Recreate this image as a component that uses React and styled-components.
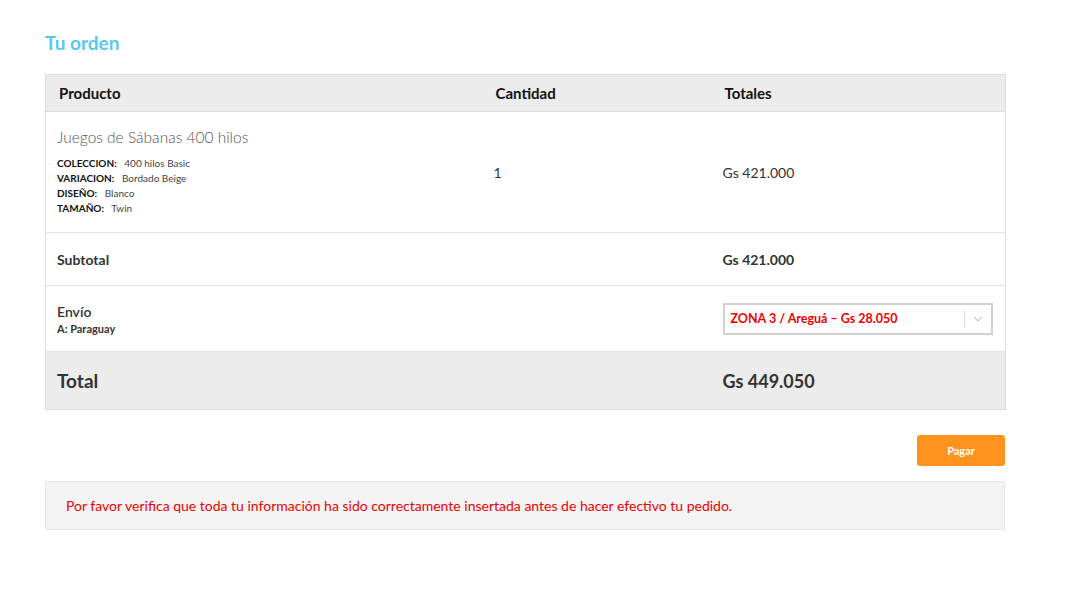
import React from "react";
import styled, { createGlobalStyle } from "styled-components";

const Global = createGlobalStyle`
  html, body { margin: 0; padding: 0; background: #fff; }
  body { font-family: "Lato", "Open Sans", sans-serif; color: #333; }
`;

const Page = styled.div`
  width: 960px;
  padding: 32px 0 0 45px;
`;

const Title = styled.h3`
  margin: 0 0 20px;
  font-size: 19px;
  font-weight: 700;
  color: #5ac8ee;
  line-height: 22px;
`;

const Table = styled.table`
  width: 960px;
  border-collapse: collapse;
  border: 1px solid #dcdcdc;
  table-layout: fixed;
`;

const Th = styled.th`
  background: #ececec;
  text-align: left;
  font-size: 15px;
  font-weight: 700;
  color: #111;
  height: 36px;
  padding: 0 13px;
  border-bottom: 1px solid #dcdcdc;
`;

const Tr = styled.tr`
  background: ${(p) => (p.$shade ? "#ececec" : "#fff")};
  border-top: 1px solid #e2e2e2;
`;

const Td = styled.td`
  padding: 0 11px;
  height: ${(p) => p.$h}px;
  vertical-align: middle;
  font-size: ${(p) => p.$size || 14}px;
  font-weight: ${(p) => p.$weight || 400};
  color: #333;
`;

const ProductName = styled.div`
  font-size: 15.5px;
  font-weight: 300;
  color: #555;
  margin-bottom: 10px;
`;

const Meta = styled.div`
  font-size: 10px;
  line-height: 15px;
  color: #444;
  & b { font-weight: 700; color: #111; margin-right: 5px; }
`;

const Small = styled.div`
  font-size: 11px;
  font-weight: 700;
  margin-top: 2px;
`;

const Select = styled.div`
  display: flex;
  align-items: center;
  width: 266px;
  height: 28px;
  border: 2px solid #d0d0d0;
  background: #fff;
`;

const SelectText = styled.span`
  flex: 1;
  padding-left: 6px;
  color: #ee0000;
  font-size: 12.5px;
  font-weight: 700;
`;

const Arrow = styled.span`
  width: 26px;
  height: 18px;
  border-left: 1px solid #d8d8d8;
  display: flex;
  align-items: center;
  justify-content: center;
`;

const Actions = styled.div`
  display: flex;
  justify-content: flex-end;
  margin: 25px 0 15px;
`;

const Button = styled.button`
  width: 88px;
  height: 31px;
  border: 0;
  border-radius: 3px;
  background: #ff931e;
  color: #fff;
  font-family: inherit;
  font-size: 11px;
  font-weight: 700;
`;

const Notice = styled.div`
  box-sizing: border-box;
  width: 960px;
  height: 49px;
  display: flex;
  align-items: center;
  padding-left: 20px;
  background: #f4f4f4;
  border: 1px solid #e8e8e8;
  color: #ee0000;
  font-size: 14px;
`;

export default function App() {
  return (
    <>
      <Global />
      <Page>
        <Title>Tu orden</Title>
        <Table>
          <colgroup>
            <col style={{ width: 437 }} />
            <col style={{ width: 229 }} />
            <col style={{ width: 294 }} />
          </colgroup>
          <thead>
            <tr>
              <Th>Producto</Th>
              <Th>Cantidad</Th>
              <Th>Totales</Th>
            </tr>
          </thead>
          <tbody>
            <Tr>
              <Td $h={120}>
                <ProductName>Juegos de Sábanas 400 hilos</ProductName>
                <Meta><b>COLECCION:</b> 400 hilos Basic</Meta>
                <Meta><b>VARIACION:</b> Bordado Beige</Meta>
                <Meta><b>DISEÑO:</b> Blanco</Meta>
                <Meta><b>TAMAÑO:</b> Twin</Meta>
              </Td>
              <Td $h={120}>1</Td>
              <Td $h={120}>Gs 421.000</Td>
            </Tr>
            <Tr>
              <Td $h={52} $weight={700}>Subtotal</Td>
              <Td $h={52} />
              <Td $h={52} $weight={700}>Gs 421.000</Td>
            </Tr>
            <Tr>
              <Td $h={65} $weight={600}>
                Envío
                <Small>A: Paraguay</Small>
              </Td>
              <Td $h={65} />
              <Td $h={65}>
                <Select>
                  <SelectText>ZONA 3 / Areguá – Gs 28.050</SelectText>
                  <Arrow>
                    <svg width="10" height="6" viewBox="0 0 10 6">
                      <path d="M1 1l4 4 4-4" fill="none" stroke="#ccc" strokeWidth="1.2" />
                    </svg>
                  </Arrow>
                </Select>
              </Td>
            </Tr>
            <Tr $shade>
              <Td $h={57} $size={19} $weight={700}>Total</Td>
              <Td $h={57} />
              <Td $h={57} $size={18} $weight={700}>Gs 449.050</Td>
            </Tr>
          </tbody>
        </Table>
        <Actions>
          <Button>Pagar</Button>
        </Actions>
        <Notice>Por favor verifica que toda tu información ha sido correctamente insertada antes de hacer efectivo tu pedido.</Notice>
      </Page>
    </>
  );
}
